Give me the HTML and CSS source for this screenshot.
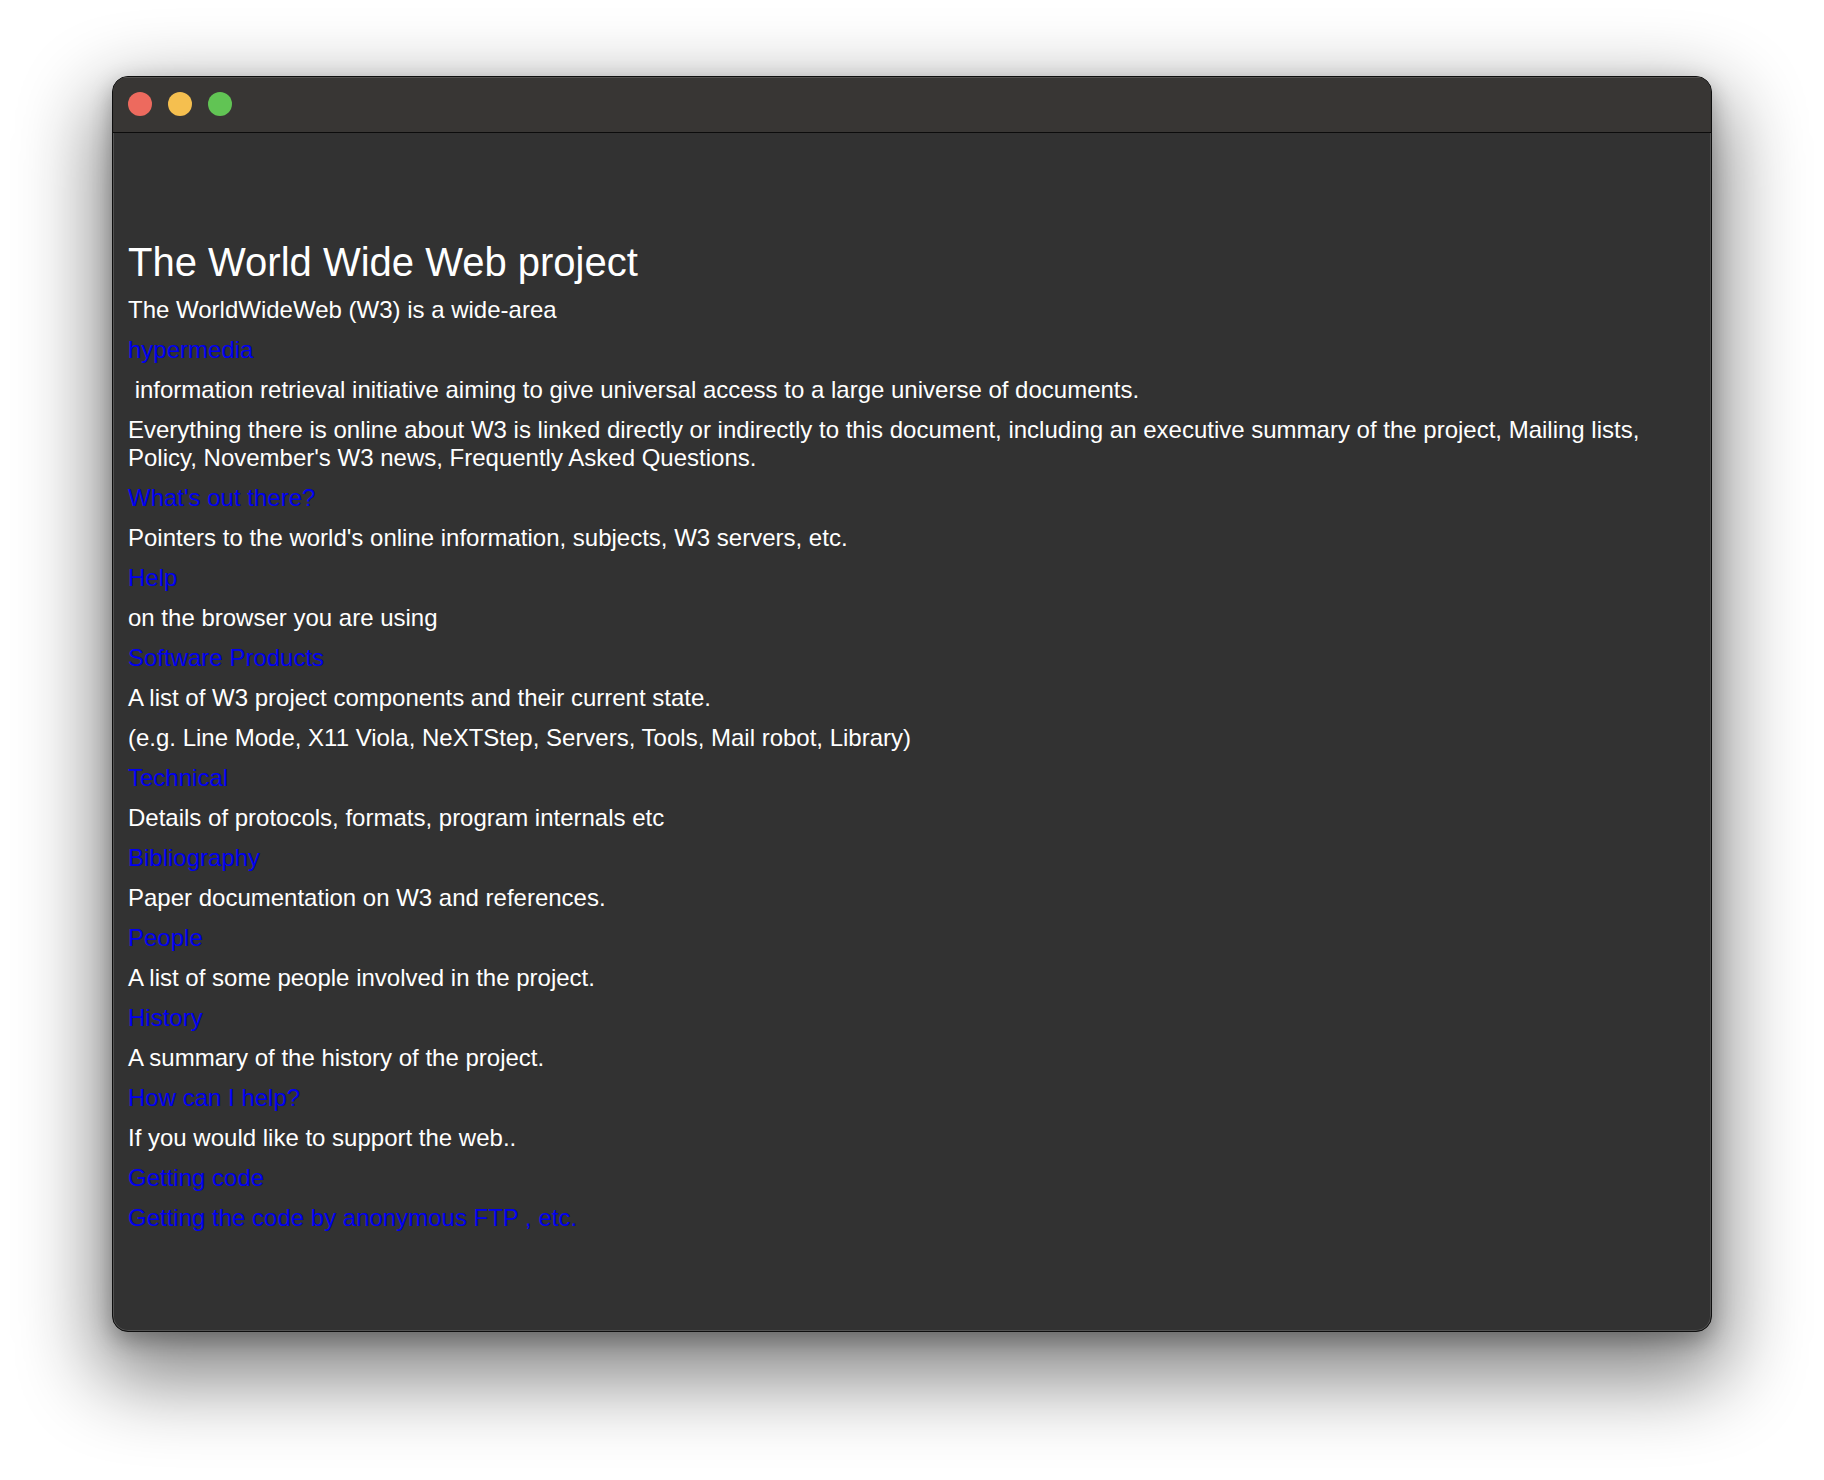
FILE: index.html
```html
<!DOCTYPE html>
<html lang="en">
<head>
<meta charset="utf-8">
<title>The World Wide Web project</title>
<link rel="stylesheet" href="styles.css">
</head>
<body>
<div class="window">
  <div class="titlebar">
    <span class="light red"></span>
    <span class="light yellow"></span>
    <span class="light green"></span>
  </div>
  <main class="content">
    <h1 class="title">The World Wide Web project</h1>
    <div class="items">
      <p class="text">The WorldWideWeb (W3) is a wide-area</p>
      <a class="link" href="#">hypermedia</a>
      <p class="text lead-space"> information retrieval initiative aiming to give universal access to a large universe of documents.</p>
      <p class="text">Everything there is online about W3 is linked directly or indirectly to this document, including an executive summary of the project, Mailing lists, Policy, November's W3 news, Frequently Asked Questions.</p>
      <a class="link" href="#">What's out there?</a>
      <p class="text">Pointers to the world's online information, subjects, W3 servers, etc.</p>
      <a class="link" href="#">Help</a>
      <p class="text">on the browser you are using</p>
      <a class="link" href="#">Software Products</a>
      <p class="text">A list of W3 project components and their current state.</p>
      <p class="text">(e.g. Line Mode, X11 Viola, NeXTStep, Servers, Tools, Mail robot, Library)</p>
      <a class="link" href="#">Technical</a>
      <p class="text">Details of protocols, formats, program internals etc</p>
      <a class="link" href="#">Bibliography</a>
      <p class="text">Paper documentation on W3 and references.</p>
      <a class="link" href="#">People</a>
      <p class="text">A list of some people involved in the project.</p>
      <a class="link" href="#">History</a>
      <p class="text">A summary of the history of the project.</p>
      <a class="link" href="#">How can I help?</a>
      <p class="text">If you would like to support the web..</p>
      <a class="link" href="#">Getting code</a>
      <a class="link" href="#">Getting the code by anonymous FTP , etc.</a>
    </div>
  </main>
</div>
</body>
</html>
```

FILE: styles.css
```css
html, body {
  margin: 0;
  padding: 0;
  background: #ffffff;
}

body {
  width: 1824px;
  height: 1480px;
  display: flex;
  justify-content: center;
  align-items: flex-start;
  padding-top: 76px;
  box-sizing: border-box;
  font-family: "Liberation Sans", Arial, Helvetica, sans-serif;
}

.window {
  width: 1600px;
  height: 1256px;
  box-sizing: border-box;
  border: 1px solid #0e0e0e;
  border-radius: 16px;
  background: #323232;
  overflow: hidden;
  display: flex;
  flex-direction: column;
  box-shadow:
    inset 0 0 0 1px rgba(255, 255, 255, 0.16),
    0 34px 80px 14px rgba(0, 0, 0, 0.48),
    0 8px 22px rgba(0, 0, 0, 0.28);
}

.titlebar {
  height: 56px;
  flex: none;
  box-sizing: border-box;
  padding-bottom: 2px;
  background: #383634;
  border-bottom: 1px solid #0c0c0c;
  display: flex;
  align-items: center;
  gap: 16px;
  padding-left: 15px;
  box-shadow: inset 0 1px 0 rgba(255, 255, 255, 0.14);
}

.light {
  width: 24px;
  height: 24px;
  border-radius: 50%;
  display: block;
}

.red { background: #ed6a5e; }
.yellow { background: #f5bf4f; }
.green { background: #61c454; }

.content {
  flex: 1;
  padding: 0 15px;
  color: #ffffff;
}

.title {
  margin: 106px 0 11px;
  font-size: 40px;
  line-height: 46px;
  font-weight: normal;
}

.items {
  display: flex;
  flex-direction: column;
  align-items: flex-start;
  gap: 12px;
}

.text {
  margin: 0;
  font-size: 24px;
  line-height: 28px;
}

.lead-space {
  white-space: pre-wrap;
}

.link {
  font-size: 24px;
  line-height: 28px;
  color: #0000f0;
  text-decoration: none;
}
```
